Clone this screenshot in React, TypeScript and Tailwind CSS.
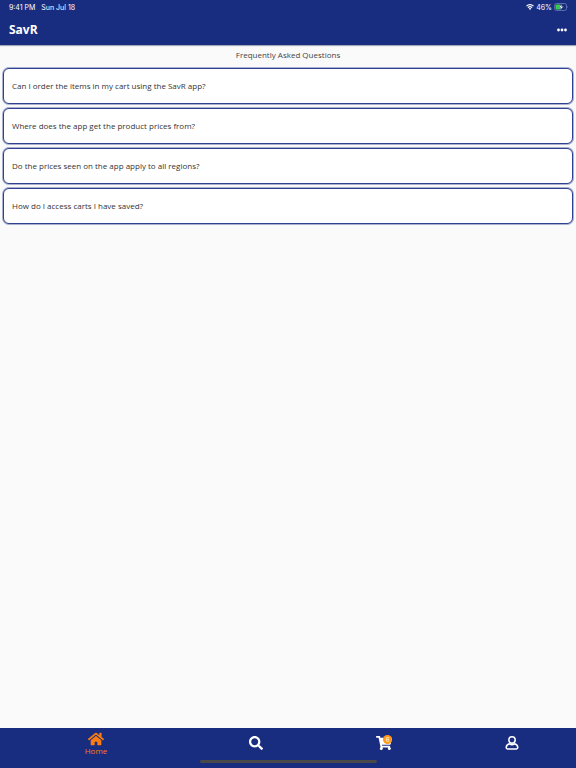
import React from "react";
import { FaHome, FaSearch, FaShoppingCart } from "react-icons/fa";

const questions = [
  "Can I order the items in my cart using the SavR app?",
  "Where does the app get the product prices from?",
  "Do the prices seen on the app apply to all regions?",
  "How do I access carts I have saved?",
];

function StatusBar() {
  return (
    <div className="flex h-3.5 items-center justify-between pr-2 pl-[9px] font-['Inter',sans-serif] text-[7px] leading-none text-white">
      <div className="flex gap-1.5">
        <span>9:41 PM</span>
        <span>Sun Jul 18</span>
      </div>
      <div className="flex items-center gap-0.5">
        <svg width="8" height="6" viewBox="0 0 16 12" fill="none" stroke="#fff" strokeWidth="2.4" aria-hidden="true">
          <path d="M1 4.2a10 10 0 0 1 14 0M3.8 7.2a6 6 0 0 1 8.4 0" />
          <path d="M8 11.8 5.4 9.2a3.7 3.7 0 0 1 5.2 0Z" fill="#fff" stroke="none" />
        </svg>
        <span>46%</span>
        <svg width="14" height="8" viewBox="0 0 28 16" aria-hidden="true">
          <rect x="1" y="1" width="24" height="14" rx="4" fill="none" stroke="#7c87b6" strokeWidth="1.4" />
          <path d="M5 3h8v10H5a2 2 0 0 1-2-2V5a2 2 0 0 1 2-2Z" fill="#34d04f" />
          <path d="M26.500 6v4c1.400-.6 1.400-3.400 0-4Z" fill="#7c87b6" />
          <path d="M16 2.500 9.500 9h4L12.500 14 19 7.200h-4Z" fill="#fff" stroke="#192d80" strokeWidth=".7" />
        </svg>
      </div>
    </div>
  );
}

function AccountIcon() {
  return (
    <svg width="14" height="14" viewBox="0 0 14 14" fill="none" stroke="#fff" strokeWidth="1.5" aria-hidden="true">
      <circle cx="7" cy="4" r="3.200" />
      <path d="M4.300 7.800C2.400 8.400 1.200 9.700 1.200 11.600c0 .9.5 1.400 1.400 1.400h8.800c.9 0 1.400-.5 1.400-1.400 0-1.900-1.200-3.200-3.100-3.800-1.600 1.100-3.800 1.100-5.400 0Z" />
    </svg>
  );
}

export default function App() {
  return (
    <div className="flex min-h-screen flex-col bg-[#fafafa] font-['Open_Sans',sans-serif] text-[#333]">
      <header className="bg-[#192d80] shadow-[0_1px_1px_#19205060]">
        <StatusBar />
        <div className="flex h-[31px] items-center justify-between px-[9px]">
          <h1 className="text-[12px] leading-4 font-bold text-white">SavR</h1>
          <button type="button" aria-label="More options" className="-mr-1 p-1">
            <svg width="10" height="4" viewBox="0 0 10 4" fill="#fff" aria-hidden="true">
              <circle cx="1.500" cy="2" r="1.400" />
              <circle cx="5" cy="2" r="1.400" />
              <circle cx="8.500" cy="2" r="1.400" />
            </svg>
          </button>
        </div>
      </header>

      <main className="flex-1 px-[3px] pt-1">
        <h2 className="text-center text-[8px] leading-3 text-[#444]">Frequently Asked Questions</h2>
        <ul className="mt-[7px] flex flex-col gap-1">
          {questions.map((question) => (
            <li key={question}>
              <button
                type="button"
                className="flex min-h-9 w-full items-center rounded-md border border-[#2f4192] bg-white px-2 text-left text-[8px] leading-3 ring-1 ring-[#2f4192]/40"
              >
                {question}
              </button>
            </li>
          ))}
        </ul>
      </main>

      <footer className="bg-[#192d80] text-white">
        <nav aria-label="Main" className="flex h-[30px]">
          <a href="#home" aria-current="page" className="flex flex-[3] flex-col items-center pt-[3px] text-[#f97b12]">
            <FaHome size={16} aria-hidden="true" />
            <span className="text-[8px] leading-2">Home</span>
          </a>
          <a href="#search" aria-label="Search" className="flex flex-[2] items-center justify-center">
            <FaSearch size={14} />
          </a>
          <a href="#cart" aria-label="Cart, 6 items" className="flex flex-[2] items-center justify-center">
            <span className="relative">
              <FaShoppingCart size={16} />
              <span className="absolute top-0 left-[7px] size-[9px] rounded-full bg-[#ff9818] text-center font-['Inter',sans-serif] text-[6px] leading-[9px] text-white">
                6
              </span>
            </span>
          </a>
          <a href="#account" aria-label="Account" className="flex flex-[2] items-center justify-center">
            <AccountIcon />
          </a>
        </nav>
        <div className="flex h-2.5 justify-center pt-0.5">
          <div className="h-[3px] w-[177px] rounded-full bg-[#494949]" />
        </div>
      </footer>
    </div>
  );
}
